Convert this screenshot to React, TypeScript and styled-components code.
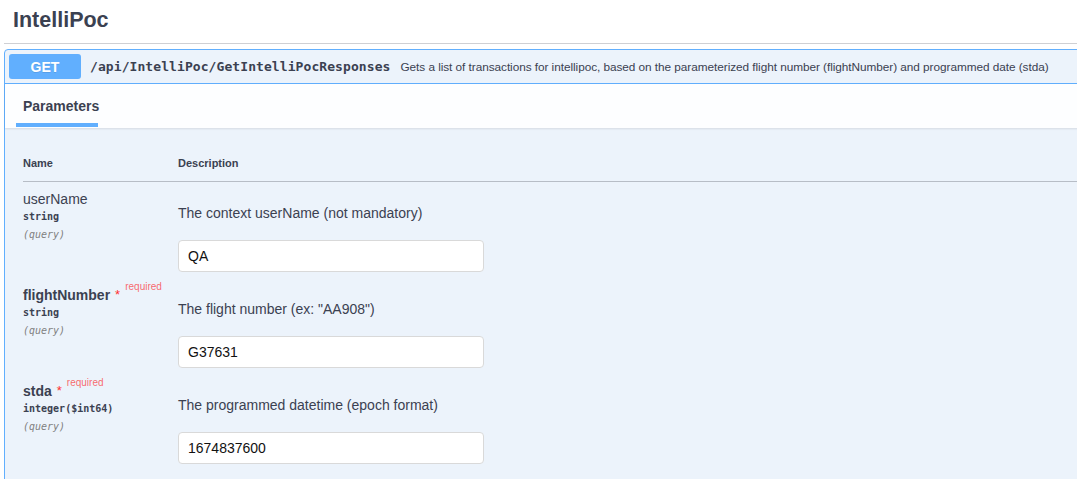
import React from "react";
import styled, { createGlobalStyle } from "styled-components";

const GlobalStyle = createGlobalStyle`
  html, body {
    margin: 0;
    padding: 0;
    background: #ffffff;
    overflow: hidden;
  }
  body {
    font-family: "Liberation Sans", Arial, sans-serif;
    color: #3b4151;
  }
`;

const Page = styled.div`
  width: 1110px;
  padding-left: 4px;
`;

const TagHeader = styled.div`
  height: 43px;
  display: flex;
  align-items: center;
  padding-left: 9px;
  border-bottom: 1px solid #cfd0d4;
`;

const Title = styled.h3`
  margin: 0;
  font-size: 21.5px;
  font-weight: 700;
  color: #3b4151;
  line-height: 1;
  padding-bottom: 1px;
`;

const OpBlock = styled.div`
  margin-top: 5px;
  border: 1px solid #61affe;
  border-radius: 4px;
  background: #ecf3fb;
`;

const Summary = styled.div`
  display: flex;
  align-items: center;
  padding: 4px;
  border-bottom: 1px solid #61affe;
`;

const Method = styled.span`
  width: 72px;
  height: 25px;
  border-radius: 3px;
  background: #61affe;
  color: #ffffff;
  font-size: 14px;
  font-weight: 700;
  display: flex;
  align-items: center;
  justify-content: center;
  text-shadow: 0 1px 0 rgba(0, 0, 0, 0.1);
`;

const Path = styled.span`
  margin-left: 9px;
  font-family: "DejaVu Sans Mono", "Liberation Mono", monospace;
  font-size: 13px;
  font-weight: 600;
  color: #3b4151;
  letter-spacing: 0.08px;
`;

const SummaryDescription = styled.span`
  margin-left: 10px;
  font-size: 11.8px;
  letter-spacing: -0.05px;
  color: #3b4151;
`;

const SectionHeader = styled.div`
  height: 44px;
  display: flex;
  align-items: stretch;
  padding-left: 11px;
  background: #fdfeff;
  box-shadow: 0 1px 2px rgba(0, 0, 0, 0.1);
`;

const Tab = styled.div`
  display: flex;
  align-items: center;
  padding: 5px 7px 0;
  font-size: 14px;
  font-weight: 700;
  color: #3b4151;
  border-bottom: 4px solid #61affe;
  box-sizing: border-box;
  width: 82px;
  margin-bottom: 1px;
`;

const Table = styled.div`
  padding: 0 0 12px 18px;
`;

const HeadRow = styled.div`
  display: grid;
  grid-template-columns: 155px 1fr;
  height: 54px;
  align-items: end;
  padding-bottom: 11px;
  box-sizing: border-box;
  border-bottom: 1px solid #b7bdc6;
`;

const HeadCell = styled.div`
  font-size: 11px;
  font-weight: 700;
  line-height: 14px;
  color: #3b4151;
`;

const Row = styled.div`
  display: grid;
  grid-template-columns: 155px 1fr;
  height: 96px;
`;

const NameCell = styled.div`
  padding-top: 8px;
  display: flex;
  flex-direction: column;
`;

const ParamName = styled.div<{ $required?: boolean }>`
  font-size: 14px;
  line-height: 18px;
  font-weight: ${(p) => (p.$required ? 700 : 400)};
  color: #3b4151;
  display: flex;
  align-items: flex-start;
  white-space: nowrap;
`;

const Star = styled.span`
  color: #ff3030;
  font-size: 13px;
  font-weight: 400;
  margin-left: 5px;
  line-height: 18px;
`;

const Required = styled.span`
  color: rgba(255, 0, 0, 0.6);
  font-size: 10px;
  font-weight: 400;
  margin-left: 5px;
  line-height: 12px;
  margin-top: -5px;
`;

const ParamType = styled.div`
  font-family: "DejaVu Sans Mono", "Liberation Mono", monospace;
  font-size: 10px;
  font-weight: 600;
  line-height: 18px;
  color: #3b4151;
`;

const ParamIn = styled.div`
  font-family: "DejaVu Sans Mono", "Liberation Mono", monospace;
  font-size: 10px;
  font-style: italic;
  line-height: 18px;
  color: #808080;
`;

const DescCell = styled.div`
  padding-top: 20px;
  display: flex;
  flex-direction: column;
`;

const DescText = styled.div`
  font-size: 14px;
  line-height: 22px;
  color: #3b4151;
`;

const Input = styled.input`
  margin-top: 16px;
  width: 306px;
  height: 32px;
  box-sizing: border-box;
  border: 1px solid #d9d9d9;
  border-radius: 4px;
  background: #ffffff;
  padding: 0 9px;
  font-family: "Liberation Sans", Arial, sans-serif;
  font-size: 14px;
  color: #111111;
  outline: none;
`;

type Param = {
  name: string;
  required?: boolean;
  type: string;
  description: string;
  value: string;
};

const params: Param[] = [
  {
    name: "userName",
    type: "string",
    description: "The context userName (not mandatory)",
    value: "QA",
  },
  {
    name: "flightNumber",
    required: true,
    type: "string",
    description: 'The flight number (ex: "AA908")',
    value: "G37631",
  },
  {
    name: "stda",
    required: true,
    type: "integer($int64)",
    description: "The programmed datetime (epoch format)",
    value: "1674837600",
  },
];

export default function App() {
  return (
    <>
      <GlobalStyle />
      <Page>
        <TagHeader>
          <Title>IntelliPoc</Title>
        </TagHeader>
        <OpBlock>
          <Summary>
            <Method>GET</Method>
            <Path>/api/IntelliPoc/GetIntelliPocResponses</Path>
            <SummaryDescription>
              Gets a list of transactions for intellipoc, based on the parameterized flight number
              (flightNumber) and programmed date (stda)
            </SummaryDescription>
          </Summary>
          <SectionHeader>
            <Tab>Parameters</Tab>
          </SectionHeader>
          <Table>
            <HeadRow>
              <HeadCell>Name</HeadCell>
              <HeadCell>Description</HeadCell>
            </HeadRow>
            {params.map((p) => (
              <Row key={p.name}>
                <NameCell>
                  <ParamName $required={p.required}>
                    {p.name}
                    {p.required && (
                      <>
                        <Star>*</Star>
                        <Required>required</Required>
                      </>
                    )}
                  </ParamName>
                  <ParamType>{p.type}</ParamType>
                  <ParamIn>(query)</ParamIn>
                </NameCell>
                <DescCell>
                  <DescText>{p.description}</DescText>
                  <Input defaultValue={p.value} />
                </DescCell>
              </Row>
            ))}
          </Table>
        </OpBlock>
      </Page>
    </>
  );
}
